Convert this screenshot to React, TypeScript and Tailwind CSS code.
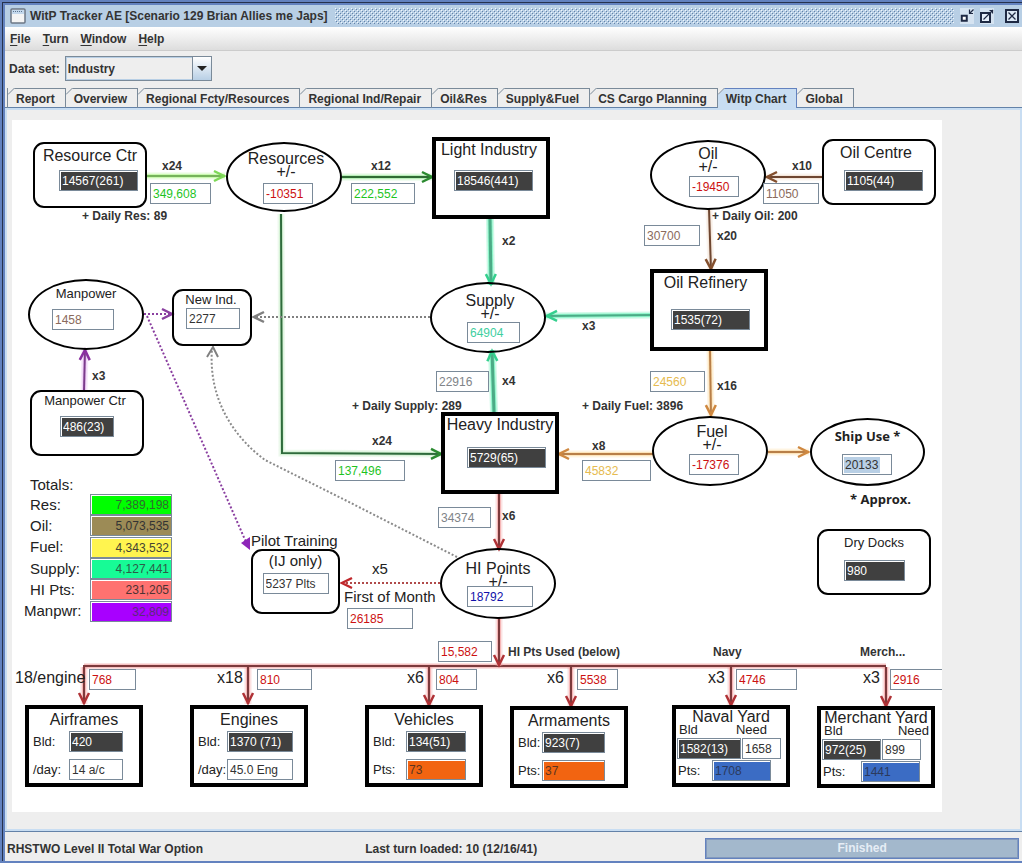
import { useState, type ReactNode } from 'react'
import clsx from 'clsx'

const MENUS = ['File', 'Turn', 'Window', 'Help']

const TABS = [
  'Report', 'Overview', 'Regional Fcty/Resources', 'Regional Ind/Repair', 'Oil&Res',
  'Supply&Fuel', 'CS Cargo Planning', 'Witp Chart', 'Global',
]

const TOTALS = [
  { id: 'res', label: 'Res:', value: '7,389,198', color: 'bg-[#00ff00] text-[#2f6b2f]' },
  { id: 'oil', label: 'Oil:', value: '5,073,535', color: 'bg-[#9c8b56] text-[#333333]' },
  { id: 'fuel', label: 'Fuel:', value: '4,343,532', color: 'bg-[#fff44f] text-[#444433]' },
  { id: 'supply', label: 'Supply:', value: '4,127,441', color: 'bg-[#17fb96] text-[#2c5c48]' },
  { id: 'hi', label: 'HI Pts:', value: '231,205', color: 'bg-[#ff7270] text-[#4d3333]' },
  { id: 'manpwr', label: 'Manpwr:', value: '32,809', color: 'bg-[#a800ff] text-[#5a2a78]' },
]

const GREEN = 'bg-white text-[#1fc41f]'
const RED = 'bg-white text-[#cc1111]'
const GRAY = 'bg-white text-[#808488]'
const BROWN = 'bg-white text-[#8a6a5c]'
const AMBER = 'bg-white text-[#e6bb50]'
const PLAIN = 'bg-white text-[#333333]'
const DARK = 'bg-[#404040] text-white'

export default function App() {
  const [tab, setTab] = useState('Witp Chart')

  return (
    <div className="min-h-screen flex flex-col bg-[#6382bf] pl-[2px] pt-[2px] pb-[2px] font-['Liberation_Sans',Arial,sans-serif] text-[12px] text-[#333333]">
      <div className="flex-1 flex flex-col border-l border-t border-[#26324d] pl-[2px] pt-[2px]">
        <TitleBar />

        <nav className="flex gap-3 h-6 items-center px-[5px] font-bold border-b border-[#cccccc] bg-gradient-to-b from-white to-[#dddddd]">
          {MENUS.map(m => (
            <button key={m} type="button" className="leading-4">
              <span className="underline underline-offset-2">{m[0]}</span>{m.slice(1)}
            </button>
          ))}
        </nav>

        <main className="flex-1 flex flex-col bg-[#eeeeee]">
          <div className="flex items-center gap-[5px] px-1 pt-[5px] pb-[7px] font-bold">
            <label htmlFor="dataset">Data set:</label>
            <div className="relative">
              <select id="dataset" className="block appearance-none w-[147px] h-[25px] pl-[2px] pr-6 border border-[#7a8a99] bg-[#eeeeee] shadow-[inset_0_0_0_1px_#b8cfe5] rounded-none">
                <option>Industry</option>
              </select>
              <span className="pointer-events-none absolute right-0 top-0 h-[25px] w-5 border border-[#7a8a99] bg-gradient-to-b from-white to-[#b8cfe5] flex items-center justify-center">
                <svg width="10" height="5" viewBox="0 0 10 5"><path d="M0 0H10L5 5Z" fill="#222" /></svg>
              </span>
            </div>
          </div>

          <div role="tablist" className="flex pl-[2px] border-b border-[#6382a8] h-5">
            {TABS.map(t => (
              <Tab key={t} name={t} active={t === tab} onClick={() => setTab(t)} />
            ))}
          </div>

          <div role="tabpanel" className="flex-1 border-2 border-[#c8ddf2] pl-[5px] pt-[10px] pb-4">
            <Chart />
          </div>
        </main>

        <footer className="grid grid-cols-[35%_1fr_31%] items-center h-[30px] pt-1 pl-[2px] pr-[3px] font-bold border-t border-[#6382a8] bg-[#eeeeee]">
          <span>RHSTWO Level II Total War Option</span>
          <span className="pl-1">Last turn loaded: 10 (12/16/41)</span>
          <div role="progressbar" aria-valuenow={100} className="h-[21px] border border-[#6382bf] shadow-[inset_0_0_0_1px_#8299bd] bg-[#a3b8cc] text-[#e6edf5] text-center leading-[19px]">
            Finished
          </div>
        </footer>
      </div>
    </div>
  )
}

function TitleBar() {
  return (
    <header className="flex items-center gap-1 h-[22px] pl-[5px] pr-[3px] bg-[#b8cfe5]">
      <svg width="16" height="16" viewBox="0 0 16 16">
        <rect x="1" y="1" width="14" height="14" rx="1" fill="#f4f4f4" stroke="#6b7785" strokeWidth="1.5" />
        <rect x="2" y="2" width="12" height="4" fill="#c4d8ec" />
        <path d="M3 3.5H13" stroke="#5d7590" strokeDasharray="1 1" />
      </svg>
      <h1 className="font-bold pr-[3px]">WitP Tracker AE [Scenario 129 Brian Allies me Japs]</h1>
      <svg className="flex-1 h-4">
        <defs>
          <pattern id="bumps" width="4" height="4" patternUnits="userSpaceOnUse">
            <path d="M0 0h1v1H0zM2 2h1v1H2z" fill="#f0f6fc" />
            <path d="M1 1h1v1H1zM3 3h1v1H3z" fill="#6382a8" />
          </pattern>
        </defs>
        <rect width="100%" height="100%" fill="url(#bumps)" />
      </svg>
      <div className="flex items-center gap-[6px] pl-[2px]">
        <button type="button" aria-label="Minimize">
          <svg width="14" height="16" viewBox="0 0 14 16" fill="none" stroke="#1f2a44">
            <rect x="0" y="0" width="14" height="16" fill="#d5e3f1" stroke="none" />
            <rect x="1.75" y="7.75" width="5" height="5" strokeWidth="2" fill="#fff" />
            <path d="M9.5 1.5V5.500H13M9.500 5.500L13.500 1.500" strokeWidth="1.200" />
          </svg>
        </button>
        <button type="button" aria-label="Maximize">
          <svg width="14" height="16" viewBox="0 0 14 16" fill="none" stroke="#1f2a44">
            <rect x="0" y="0" width="14" height="16" fill="#d5e3f1" stroke="none" />
            <rect x="1" y="5" width="9" height="9" strokeWidth="2" fill="#e6effa" />
            <path d="M3.500 11.500L13 2M9.500 2.500H12.500V5.500" strokeWidth="1.200" />
          </svg>
        </button>
        <button type="button" aria-label="Close" className="pl-[5px]">
          <svg width="14" height="16" viewBox="0 0 14 16" fill="none" stroke="#1f2a44">
            <rect x="1" y="2" width="12" height="12" strokeWidth="2" fill="#dce8f5" />
            <path d="M3.500 4.500L10.500 11.500M10.500 4.500L3.500 11.500" strokeWidth="1.300" />
          </svg>
        </button>
      </div>
    </header>
  )
}

function Tab({ name, active, onClick }: { name: string; active: boolean; onClick: () => void }) {
  return (
    <button type="button" role="tab" aria-selected={active} onClick={onClick}
      className={clsx(
        'relative h-5 pl-2 pr-[10px] font-bold leading-[18px] whitespace-nowrap border-t border-r first:border-l',
        active ? 'bg-[#c8ddf2] border-[#6382bf] -mb-px' : 'border-[#7a8a99]',
      )}>
      <svg className="absolute left-0 -top-px" width="7" height="7" viewBox="0 0 7 7">
        <path d="M0 0H7L0 7Z" fill="#eeeeee" />
        <path d="M0 6.500L6.500 0" stroke="#7a8a99" />
      </svg>
      {name}
    </button>
  )
}

function Chart() {
  return (
    <div className="relative w-[930px] h-[692px] bg-white overflow-hidden">
      <Flows />

      <Node shape="round" className="left-[21px] top-[22px] w-[114px] h-[66px] pt-1">Resource Ctr</Node>
      <Node shape="oval" className="left-[214px] top-[22px] w-[116px] h-[70px] pt-2" net>Resources</Node>
      <Node shape="plant" className="left-[420px] top-[17px] w-[118px] h-[82px] pt-[1px] pr-1">Light Industry</Node>
      <Node shape="oval" className="left-[638px] top-[20px] w-[116px] h-[70px] pt-[5px] pr-1" net>Oil</Node>
      <Node shape="round" className="left-[810px] top-[19px] w-[114px] h-[66px] pt-1 pr-[6px]">Oil Centre</Node>
      <Node shape="plant" className="left-[638px] top-[149px] w-[118px] h-[82px] pt-[2px] pr-[7px]">Oil Refinery</Node>
      <Node shape="oval" className="left-[418px] top-[162px] w-[116px] h-[71px] pt-[10px]" net>Supply</Node>
      <Node shape="oval" className="left-[16px] top-[159px] w-[116px] h-[71px] pt-[5px]" small>Manpower</Node>
      <Node shape="round" className="left-[160px] top-[169px] w-[80px] h-[57px] pt-[1px] pr-[2px]" small>New Ind.</Node>
      <Node shape="round" className="left-[18px] top-[270px] w-[114px] h-[66px] pt-[1px] pr-1" small>Manpower Ctr</Node>
      <Node shape="plant" className="left-[429px] top-[292px] w-[118px] h-[82px] pt-[1px]">Heavy Industry</Node>
      <Node shape="oval" className="left-[640px] top-[296px] w-[116px] h-[70px] pt-[7px]" net>Fuel</Node>
      <Node shape="oval" className="left-[798px] top-[298px] w-[115px] h-[68px] pt-2 font-['Open_Sans',sans-serif] font-bold" small>Ship Use *</Node>
      <Node shape="round" className="left-[805px] top-[409px] w-[114px] h-[66px] pt-1" small>Dry Docks</Node>
      <Node shape="oval" className="left-[428px] top-[428px] w-[116px] h-[71px] pt-3 pr-1" net>HI Points</Node>

      <Field label="Resource centres" value="14567(261)" className={clsx(DARK, 'left-[47px] top-[50px] w-[79px]')} />
      <Field label="Resources produced" value="349,608" className={clsx(GREEN, 'left-[138px] top-[63px] w-[61px]')} />
      <Field label="Resources balance" value="-10351" className={clsx(RED, 'left-[251px] top-[63px] w-[50px]')} />
      <Field label="Resources to light industry" value="222,552" className={clsx(GREEN, 'left-[339px] top-[63px] w-[64px]')} />
      <Field label="Light industry" value="18546(441)" className={clsx(DARK, 'left-[442px] top-[50px] w-[79px]')} />
      <Field label="Oil balance" value="-19450" className={clsx(RED, 'left-[677px] top-[56px] w-[50px]')} />
      <Field label="Oil produced" value="11050" className={clsx(BROWN, 'left-[751px] top-[63px] w-[56px]')} />
      <Field label="Oil centres" value="1105(44)" className={clsx(DARK, 'left-[832px] top-[50px] w-[79px]')} />
      <Field label="Oil to refinery" value="30700" className={clsx(BROWN, 'left-[632px] top-[105px] w-[56px]')} />
      <Field label="Oil refinery" value="1535(72)" className={clsx(DARK, 'left-[659px] top-[189px] w-[79px]')} />
      <Field label="Supply balance" value="64904" className={clsx('bg-white text-[#3fcf9f]', 'left-[455px] top-[202px] w-[53px]')} />
      <Field label="Manpower" value="1458" className={clsx(BROWN, 'left-[40px] top-[189px] w-[62px]')} />
      <Field label="New industry" value="2277" className={clsx(PLAIN, 'left-[174px] top-[188px] w-[54px]')} />
      <Field label="Manpower centres" value="486(23)" className={clsx(DARK, 'left-[48px] top-[296px] w-[54px]')} />
      <Field label="Resources to heavy industry" value="137,496" className={clsx(GREEN, 'left-[323px] top-[340px] w-[70px]')} />
      <Field label="Supply from heavy industry" value="22916" className={clsx(GRAY, 'left-[424px] top-[251px] w-[53px]')} />
      <Field label="Fuel from refinery" value="24560" className={clsx(AMBER, 'left-[638px] top-[251px] w-[55px]')} />
      <Field label="Heavy industry" value="5729(65)" className={clsx(DARK, 'left-[455px] top-[327px] w-[79px]')} />
      <Field label="Fuel to heavy industry" value="45832" className={clsx(AMBER, 'left-[570px] top-[340px] w-[69px]')} />
      <Field label="Fuel balance" value="-17376" className={clsx(RED, 'left-[677px] top-[334px] w-[50px]')} />
      <Field label="Ship use" value="20133" className="text-[#333333] bg-white bg-[linear-gradient(#b8cfe5,#b8cfe5)] bg-no-repeat bg-[length:36px_16px] bg-[position:1px_2px] left-[830px] top-[334px] w-[50px]" />
      <Field label="Dry docks" value="980" className={clsx(DARK, 'left-[832px] top-[440px] w-[61px]')} />
      <Field label="HI points made" value="34374" className={clsx(GRAY, 'left-[426px] top-[387px] w-[53px]')} />
      <Field label="HI points balance" value="18792" className={clsx('bg-white text-[#1111aa]', 'left-[455px] top-[466px] w-[66px]')} />
      <Field label="First of month" value="26185" className={clsx(RED, 'left-[335px] top-[488px] w-[66px]')} />
      <Field label="HI points used" value="15,582" className={clsx(RED, 'left-[426px] top-[521px] w-[54px]')} />
      <Field label="Airframes HI" value="768" className={clsx(RED, 'left-[77px] top-[549px] w-[47px]')} />
      <Field label="Engines HI" value="810" className={clsx(RED, 'left-[245px] top-[549px] w-[55px]')} />
      <Field label="Vehicles HI" value="804" className={clsx(RED, 'left-[424px] top-[549px] w-[41px]')} />
      <Field label="Armaments HI" value="5538" className={clsx(RED, 'left-[565px] top-[549px] w-[41px]')} />
      <Field label="Naval yard HI" value="4746" className={clsx(RED, 'left-[724px] top-[549px] w-[61px]')} />
      <Field label="Merchant yard HI" value="2916" className={clsx(RED, 'left-[878px] top-[549px] w-[60px]')} />

      <Note className="left-[150px] top-[38px]">x24</Note>
      <Note className="left-[359px] top-[38px]">x12</Note>
      <Note className="left-[780px] top-[38px]">x10</Note>
      <Note className="left-[70px] top-[88px]">+ Daily Res: 89</Note>
      <Note className="left-[700px] top-[88px]">+ Daily Oil: 200</Note>
      <Note className="left-[705px] top-[108px]">x20</Note>
      <Note className="left-[490px] top-[113px]">x2</Note>
      <Note className="left-[570px] top-[198px]">x3</Note>
      <Note className="left-[80px] top-[248px]">x3</Note>
      <Note className="left-[490px] top-[253px]">x4</Note>
      <Note className="left-[705px] top-[258px]">x16</Note>
      <Note className="left-[340px] top-[278px]">+ Daily Supply: 289</Note>
      <Note className="left-[570px] top-[278px]">+ Daily Fuel: 3896</Note>
      <Note className="left-[360px] top-[313px]">x24</Note>
      <Note className="left-[580px] top-[318px]">x8</Note>
      <Note className="left-[490px] top-[388px]">x6</Note>
      <Note className="left-[496px] top-[524px]">HI Pts Used (below)</Note>
      <Note className="left-[701px] top-[524px]">Navy</Note>
      <Note className="left-[848px] top-[524px]">Merch...</Note>
      <span className="absolute left-[838px] top-[371px] text-[13px] leading-4 font-bold text-[#222222] font-['Open_Sans',sans-serif]">* Approx.</span>

      <PilotTraining />

      <Caption className="left-[360px] top-[441px] text-[15px]">x5</Caption>
      <Caption className="left-[332px] top-[469px] text-[15px]">First of Month</Caption>
      <Caption className="left-[3px] top-[550px] text-[16px]">18/engine</Caption>
      <Caption className="left-[205px] top-[550px] text-[16px]">x18</Caption>
      <Caption className="left-[395px] top-[550px] text-[16px]">x6</Caption>
      <Caption className="left-[535px] top-[550px] text-[16px]">x6</Caption>
      <Caption className="left-[696px] top-[550px] text-[16px]">x3</Caption>
      <Caption className="left-[851px] top-[550px] text-[16px]">x3</Caption>

      <Totals />

      <Factory name="Airframes" className="left-[13px] top-[585px]" labelWidth="w-9" rows={[
        ['Bld:', '420', clsx(DARK, 'w-[54px]')],
        ['/day:', '14 a/c', clsx(PLAIN, 'w-[54px]')],
      ]} />
      <Factory name="Engines" className="left-[178px] top-[585px]" labelWidth="w-[29px]" rows={[
        ['Bld:', '1370 (71)', clsx(DARK, 'w-[66px]')],
        ['/day:', '45.0 Eng', clsx(PLAIN, 'w-[66px]')],
      ]} />
      <Factory name="Vehicles" className="left-[353px] top-[585px]" labelWidth="w-[33px]" rows={[
        ['Bld:', '134(51)', clsx(DARK, 'w-[60px]')],
        ['Pts:', '73', 'bg-[#f26411] text-[#5c3420] w-[60px]'],
      ]} />
      <Factory name="Armaments" className="left-[498px] top-[586px]" labelWidth="w-6" rows={[
        ['Bld:', '923(7)', clsx(DARK, 'w-[63px]')],
        ['Pts:', '37', 'bg-[#f26411] text-[#5c3420] w-[63px]'],
      ]} />

      <Yard name="Naval Yard" className="left-[660px] top-[585px]" headClass="pr-[19px]" ptsClass="w-[34px]"
        bld="1582(13)" bldClass="w-16" need="1658" pts="1708" />
      <Yard name="Merchant Yard" className="left-[805px] top-[586px]" headClass="pr-[2px]" ptsClass="w-[38px]"
        bld="972(25)" bldClass="w-[59px]" need="899" pts="1441" />
    </div>
  )
}

const SHAPES = {
  round: 'border-2 rounded-[11px]',
  oval: 'border-2 rounded-[50%]',
  plant: 'border-4',
}

function Node({ shape, className, small, net, children }: {
  shape: keyof typeof SHAPES; className: string; small?: boolean; net?: boolean; children: ReactNode
}) {
  return (
    <div className={clsx('absolute border-black text-center text-[#222222] whitespace-nowrap', SHAPES[shape], className)}>
      {net
        ? <p className="text-[16px] leading-[13px] pl-1">{children}<br />+/-</p>
        : <p className={clsx('leading-4', small ? 'text-[13px]' : 'text-[16px]')}>{children}</p>}
    </div>
  )
}

const FIELD = 'block h-[21px] px-[2px] pt-[1px] border border-[#7a8a99] shadow-[inset_1px_1px_0_white] text-[12px]'

function Field({ label, value, className }: { label: string; value: string; className: string }) {
  return <input aria-label={label} defaultValue={value} className={clsx('absolute', FIELD, className)} />
}

function Note({ className, children }: { className: string; children: ReactNode }) {
  return <span className={clsx('absolute font-bold leading-4 whitespace-nowrap', className)}>{children}</span>
}

function Caption({ className, children }: { className: string; children: ReactNode }) {
  return <span className={clsx('absolute leading-4 whitespace-nowrap text-[#222222]', className)}>{children}</span>
}

function PilotTraining() {
  return (
    <section className="absolute left-[239px] top-[413px] text-[15px] leading-4 text-[#222222]">
      <h2 className="whitespace-nowrap">Pilot Training</h2>
      <div className="flex flex-col items-center gap-1 w-[89px] h-[65px] pt-[2px] border-2 border-black rounded-[11px]">
        <label htmlFor="pilots">(IJ only)</label>
        <input id="pilots" defaultValue="5237 Plts" className={clsx(FIELD, PLAIN, 'w-[66px]')} />
      </div>
    </section>
  )
}

function Totals() {
  return (
    <section className="absolute left-[12px] top-[356px] w-[148px] text-[#222222]">
      <h2 className="text-[15px] leading-[18px] pl-[6px]">Totals:</h2>
      <div className="grid grid-rows-6 h-[128px]">
        {TOTALS.map(t => (
          <div key={t.id} className="flex items-center justify-between">
            <label htmlFor={t.id} className={clsx('text-[15px] leading-4', t.id !== 'manpwr' && 'pl-[6px]')}>{t.label}</label>
            <input id={t.id} defaultValue={t.value} className={clsx(FIELD, 'w-[82px] text-right', t.color)} />
          </div>
        ))}
      </div>
    </section>
  )
}

function Factory({ name, className, labelWidth, rows }: {
  name: string; className: string; labelWidth: string; rows: string[][]
}) {
  return (
    <section className={clsx('absolute w-[118px] h-[82px] border-4 border-black text-[#222222]', className)}>
      <h2 className="text-center text-[16px] leading-[22px]">{name}</h2>
      <div className="flex flex-col gap-[7px] pl-1">
        {rows.map(([label, value, style]) => (
          <label key={label} className="flex items-center text-[13px] leading-4">
            <span className={clsx('shrink-0', labelWidth)}>{label}</span>
            <input defaultValue={value} className={clsx(FIELD, style)} />
          </label>
        ))}
      </div>
    </section>
  )
}

function Yard({ name, className, headClass, ptsClass, bld, bldClass, need, pts }: {
  name: string; className: string; headClass: string; ptsClass: string
  bld: string; bldClass: string; need: string; pts: string
}) {
  return (
    <section className={clsx('absolute w-[118px] h-[82px] border-4 border-black text-[#222222] text-[13px]', className)}>
      <h2 className="text-center text-[16px] leading-4 whitespace-nowrap">{name}</h2>
      <div className={clsx('flex justify-between pl-[3px] pb-[3px] leading-[10px]', headClass)}>
        <label htmlFor={`${name}-bld`}>Bld</label>
        <label htmlFor={`${name}-need`}>Need</label>
      </div>
      <div className="flex gap-px pl-px pb-px">
        <input id={`${name}-bld`} defaultValue={bld} className={clsx(FIELD, DARK, bldClass)} />
        <input id={`${name}-need`} defaultValue={need} className={clsx(FIELD, PLAIN, 'w-[39px]')} />
      </div>
      <label className="flex items-center pl-[2px]">
        <span className={ptsClass}>Pts:</span>
        <input defaultValue={pts} className={clsx(FIELD, 'w-[59px] bg-[#3b6cc4] text-[#2c3a5c]')} />
      </label>
    </section>
  )
}

type Point = [number, number]

// Polyline with a soft glow behind it and an open arrow head on its last point
function Arrow({ points, color, glow, width = 2, dotted, head = color }: {
  points: Point[]; color: string; glow?: string; width?: number; dotted?: boolean; head?: string
}) {
  const [x2, y2] = points[points.length - 1]
  const [x1, y1] = points[points.length - 2]
  const angle = (Math.atan2(y2 - y1, x2 - x1) * 180) / Math.PI
  const d = 'M' + points.map(p => p.join(' ')).join('L')
  return (
    <g fill="none">
      {glow && <path d={d} stroke={glow} strokeWidth={width + 5} opacity="0.3" />}
      {glow && <path d={d} stroke={glow} strokeWidth={width + 2} opacity="0.6" />}
      <path d={d} stroke={color} strokeWidth={width} strokeDasharray={dotted ? '2 2' : undefined} />
      <path d="M-11 -5L-1 0L-11 5" stroke={head} strokeWidth="2.500" transform={`translate(${x2} ${y2}) rotate(${angle})`} />
    </g>
  )
}

function Flows() {
  const hi = { color: '#7c3a3c', glow: '#f29a9a', head: '#b03236' }
  const fuel = { color: '#b87f48', glow: '#fbd9a0', head: '#cf8840' }
  const supply = { color: '#4cab86', glow: '#5ff0b4', head: '#35cf8e' }
  const drops: Point[] = [[84, 704], [248, 704], [429, 706], [571, 707], [731, 706], [886, 707]]

  return (
    <svg className="absolute inset-0" width="930" height="692" viewBox="12 120 930 692">
      <Arrow points={[[147, 176], [225, 176]]} color="#76b35a" glow="#b4f590" head="#7ed957" />
      <Arrow points={[[342, 177], [433, 177]]} color="#2f6b35" glow="#9be89b" head="#2b8a30" />
      <Arrow points={[[281, 214], [282, 453], [442, 454]]} color="#2f6b3c" glow="#c3ecc3" head="#2b8a30" />
      <Arrow points={[[490, 219], [491, 285]]} {...supply} width={3} />
      <Arrow points={[[652, 315], [546, 316]]} {...supply} />
      <Arrow points={[[494, 412], [492, 350]]} {...supply} width={3} />
      <Arrow points={[[822, 177], [766, 177]]} color="#6e4630" glow="#f0dccb" head="#84502e" />
      <Arrow points={[[709, 209], [711, 270]]} color="#6e4630" glow="#f0dccb" head="#84502e" />
      <Arrow points={[[710, 351], [711, 416]]} {...fuel} />
      <Arrow points={[[653, 454], [558, 454]]} {...fuel} />
      <Arrow points={[[768, 452], [809, 452]]} {...fuel} />
      <Arrow points={[[84, 391], [85, 349]]} color="#7b3b8c" glow="#e6b8f2" head="#8a2fa0" />
      <Arrow points={[[144, 314], [173, 314]]} color="#8a3fa0" dotted />
      <path d="M147 316L246 542" fill="none" stroke="#8a3fa0" strokeWidth="2" strokeDasharray="2 2" />
      <path d="M241 543L250 537L250 550Z" fill="#8d26b8" />
      <Arrow points={[[430, 317], [253, 317]]} color="#808080" dotted />
      <path d="M457 557L345 500L265 460C235 438 208 400 212 349" fill="none" stroke="#8a8a8a" strokeWidth="2" strokeDasharray="2 2" />
      <path d="M207 357L213 347L218 357" fill="none" stroke="#808080" strokeWidth="2" />
      <Arrow points={[[499, 494], [499, 550]]} {...hi} />
      <Arrow points={[[440, 583], [341, 583]]} color="#b04a4a" head="#c0282c" dotted />
      <path d="M84 666H886" stroke="#f29a9a" strokeWidth="5" opacity="0.6" />
      <path d="M83 666H886" stroke="#7c3a3c" strokeWidth="2" />
      <Arrow points={[[499, 618], [499, 666]]} {...hi} />
      {drops.map(([x, y]) => (
        <Arrow key={x} points={[[x, 667], [x, y]]} {...hi} />
      ))}
    </svg>
  )
}
